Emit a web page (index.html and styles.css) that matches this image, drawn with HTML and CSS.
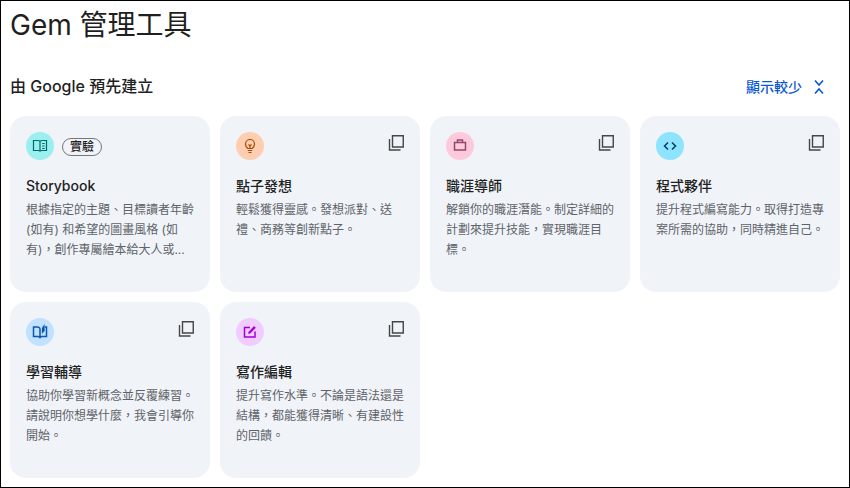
FILE: index.html
```html
<!DOCTYPE html>
<html lang="zh-Hant">
<head>
<meta charset="utf-8">
<title>Gem 管理工具</title>
<link rel="stylesheet" href="styles.css">
</head>
<body>
<main class="page">
  <h1 class="title">Gem 管理工具</h1>
  <div class="section-head">
    <h2 class="section-title">由 Google 預先建立</h2>
    <button class="toggle">顯示較少
      <svg class="toggle-icon" viewBox="0 0 16 24"><path d="M4 5.500 8 10l4-4.500M4 18.500 8 14l4 4.500"/></svg>
    </button>
  </div>
  <div class="grid">
    <article class="card">
      <div class="card-top">
        <span class="badge teal"><svg class="thin" viewBox="0 0 16 16"><path d="M1.500 2.500H6c1 0 2 .5 2 1.500 0-1 1-1.500 2-1.500h4.500v10h-5c-.7 0-1.500.3-1.500 1 0-.7-.8-1-1.500-1h-5zM8 4v9.500M10.200 5.500h2.500M10.200 8h2.500M10.200 10.500h2.500"/></svg></span>
        <span class="chip">實驗</span>
      </div>
      <h3 class="name">Storybook</h3>
      <p class="desc">根據指定的主題、目標讀者年齡 (如有) 和希望的圖畫風格 (如有)，創作專屬繪本給大人或...</p>
    </article>
    <article class="card">
      <div class="card-top">
        <span class="badge orange"><svg class="thin" viewBox="0 0 16 16"><path d="M5.800 10.500C4.500 9.700 3.500 8.400 3.500 6a4.500 4.500 0 0 1 9 0c0 2.400-1 3.700-2.300 4.500zM5.800 12.500h4.400M6.500 14.500h3M6.500 6.500 8 8l1.500-1.500M8 8v2.500"/></svg></span>
        <svg class="copy" viewBox="0 0 16 16"><path d="M4.500.75h10.750V12H4.500zM1.500 4v11h11"/></svg>
      </div>
      <h3 class="name">點子發想</h3>
      <p class="desc">輕鬆獲得靈感。發想派對、送禮、商務等創新點子。</p>
    </article>
    <article class="card">
      <div class="card-top">
        <span class="badge pink"><svg viewBox="0 0 16 16"><path d="M2.500 4.500h11V12h-11zM5.500 4.500V2h5v2.500"/></svg></span>
        <svg class="copy" viewBox="0 0 16 16"><path d="M4.500.75h10.750V12H4.500zM1.500 4v11h11"/></svg>
      </div>
      <h3 class="name">職涯導師</h3>
      <p class="desc">解鎖你的職涯潛能。制定詳細的計劃來提升技能，實現職涯目標。</p>
    </article>
    <article class="card">
      <div class="card-top">
        <span class="badge cyan"><svg viewBox="0 0 16 16"><path d="M6 4.500 2.500 8 6 11.500M10 4.500 13.500 8 10 11.500"/></svg></span>
        <svg class="copy" viewBox="0 0 16 16"><path d="M4.500.75h10.750V12H4.500zM1.500 4v11h11"/></svg>
      </div>
      <h3 class="name">程式夥伴</h3>
      <p class="desc">提升程式編寫能力。取得打造專案所需的協助，同時精進自己。</p>
    </article>
    <article class="card">
      <div class="card-top">
        <span class="badge blue"><svg viewBox="0 0 16 16"><path d="M8 4.500C7.300 3.500 6.500 3 5.500 3H1.500v9.500h4.500c1 0 1.500.3 2 1 .5-.7 1-1 2-1h4.500V3h-1.500M8 4.500v9"/><path class="fill" d="M10 9.500V4l2.500-3.500v6.500z"/></svg></span>
        <svg class="copy" viewBox="0 0 16 16"><path d="M4.500.75h10.750V12H4.500zM1.500 4v11h11"/></svg>
      </div>
      <h3 class="name">學習輔導</h3>
      <p class="desc">協助你學習新概念並反覆練習。請說明你想學什麼，我會引導你開始。</p>
    </article>
    <article class="card">
      <div class="card-top">
        <span class="badge purple"><svg viewBox="0 0 16 16"><path d="M8 3.500H2.500V13H13V7.500"/><path class="fill" d="M6.500 9.500V8.200L12 2.200l1.700 1.600-5.700 5.700z"/></svg></span>
        <svg class="copy" viewBox="0 0 16 16"><path d="M4.500.75h10.750V12H4.500zM1.500 4v11h11"/></svg>
      </div>
      <h3 class="name">寫作編輯</h3>
      <p class="desc">提升寫作水準。不論是語法還是結構，都能獲得清晰、有建設性的回饋。</p>
    </article>
  </div>
</main>
</body>
</html>
```
FILE: styles.css
```css
* { box-sizing: border-box; }
html, body { margin: 0; height: 100%; background: #fff; }
body {
  font-family: Inter, "Noto Sans CJK TC", sans-serif;
  color: #1f1f1f;
  overflow: hidden;
}
.page {
  height: 488px;
  width: 850px;
  border: 1px solid #000;
  padding: 0 9px;
  display: flex;
  flex-direction: column;
}
.title {
  margin: 6px 0 0 0;
  font-size: 28px;
  line-height: 36px;
  font-weight: 400;
}
.section-head {
  margin-top: 26px;
  height: 36px;
  display: flex;
  align-items: center;
  justify-content: space-between;
}
.section-title {
  margin: 0 0 2px;
  font-size: 16px;
  font-weight: 500;
  line-height: 24px;
}
.toggle {
  display: flex;
  align-items: center;
  gap: 9px;
  margin-right: 13px;
  padding: 0;
  border: 0;
  background: none;
  font: 500 14px/20px Inter, "Noto Sans CJK TC", sans-serif;
  color: #0b57d0;
}
.toggle-icon {
  width: 16px;
  height: 24px;
  fill: none;
  stroke: #0b57d0;
  stroke-width: 1.600;
}
.grid {
  margin-top: 11px;
  display: grid;
  grid-template-columns: repeat(4, 200px);
  grid-auto-rows: 176px;
  gap: 10px;
}
.card {
  background: #f0f4f9;
  border-radius: 16px;
  padding: 16px;
}
.card-top {
  height: 28px;
  display: flex;
  align-items: flex-start;
}
.badge {
  width: 28px;
  height: 28px;
  border-radius: 50%;
  display: flex;
  align-items: center;
  justify-content: center;
}
.badge svg {
  width: 16px;
  height: 16px;
  fill: none;
  stroke: currentColor;
  stroke-width: 1.500;
}
.badge .thin { stroke-width: 1.200; }
.badge .fill { fill: currentColor; stroke-width: 0.300; }
.teal { background: #9befef; color: #00696b; }
.orange { background: #ffcdb0; color: #a14a00; }
.pink { background: #ffc9dc; color: #8e4a6a; }
.cyan { background: #8ee3ff; color: #00405c; }
.blue { background: #c2e0ff; color: #0b57a8; }
.purple { background: #f1ccff; color: #a100d6; }
.chip {
  margin: 6px 0 0 8px;
  height: 18px;
  width: 40px;
  border: 1px solid #747775;
  border-radius: 9px;
  font-size: 12px;
  font-weight: 500;
  line-height: 16px;
  text-align: center;
}
.copy {
  width: 16px;
  height: 16px;
  margin: 3px 0 0 auto;
  fill: none;
  stroke: #444746;
  stroke-width: 1.400;
}
.name {
  margin: 16px 0 0;
  font-size: 14px;
  font-weight: 500;
  line-height: 20px;
}
.desc {
  margin: 4px 0 0;
  font-size: 12px;
  line-height: 20px;
  color: #5f6368;
}
```
